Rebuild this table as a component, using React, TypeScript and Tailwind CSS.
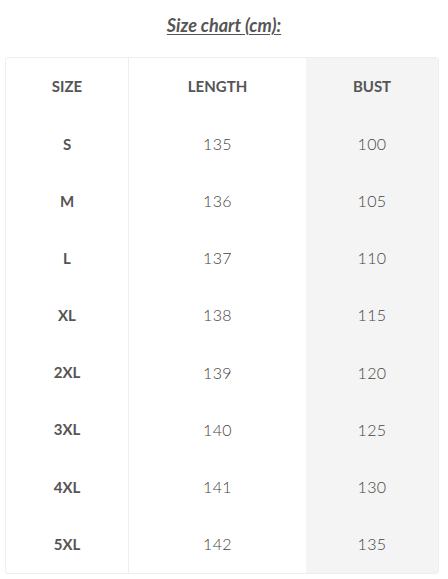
const rows = [
  ['S', '135', '100'],
  ['M', '136', '105'],
  ['L', '137', '110'],
  ['XL', '138', '115'],
  ['2XL', '139', '120'],
  ['3XL', '140', '125'],
  ['4XL', '141', '130'],
  ['5XL', '142', '135'],
];

export default function App() {
  return (
    <div className="w-[448px] h-[579px] bg-white font-['Lato',_'Liberation_Sans',_sans-serif] text-[#555]">
      <div className="pt-[12px] h-[57px] text-center">
        <span className="text-[18px] font-bold italic underline underline-offset-2">Size chart (cm):</span>
      </div>
      <div className="ml-[5px] w-[434px] border border-[#eee] rounded-[3px] overflow-hidden">
        <div className="grid grid-cols-[123px_177px_1fr]">
          <div className="border-r border-[#eee]">
            <div className="h-[57.2px] flex items-center justify-center text-[15px] font-bold">SIZE</div>
            {rows.map((r) => (
              <div key={r[0]} className="h-[57.2px] flex items-center justify-center text-[15px] font-bold">
                {r[0]}
              </div>
            ))}
          </div>
          <div>
            <div className="h-[57.2px] flex items-center justify-center text-[15px] font-bold">LENGTH</div>
            {rows.map((r) => (
              <div key={r[0]} className="h-[57.2px] flex items-center justify-center text-[16px] font-light tracking-wide text-[#444]">
                {r[1]}
              </div>
            ))}
          </div>
          <div className="bg-[#f4f4f4]">
            <div className="h-[57.2px] flex items-center justify-center text-[15px] font-bold">BUST</div>
            {rows.map((r) => (
              <div key={r[0]} className="h-[57.2px] flex items-center justify-center text-[16px] font-light tracking-wide text-[#444]">
                {r[2]}
              </div>
            ))}
          </div>
        </div>
      </div>
    </div>
  );
}
